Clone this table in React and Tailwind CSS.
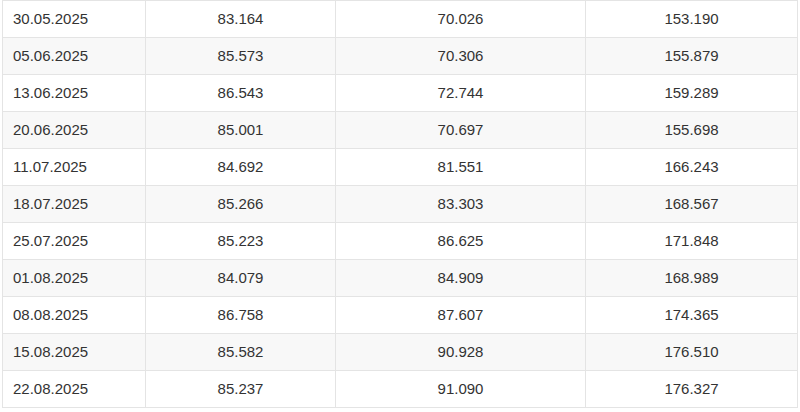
import React from "react";

const rows = [
  ["30.05.2025", "83.164", "70.026", "153.190"],
  ["05.06.2025", "85.573", "70.306", "155.879"],
  ["13.06.2025", "86.543", "72.744", "159.289"],
  ["20.06.2025", "85.001", "70.697", "155.698"],
  ["11.07.2025", "84.692", "81.551", "166.243"],
  ["18.07.2025", "85.266", "83.303", "168.567"],
  ["25.07.2025", "85.223", "86.625", "171.848"],
  ["01.08.2025", "84.079", "84.909", "168.989"],
  ["08.08.2025", "86.758", "87.607", "174.365"],
  ["15.08.2025", "85.582", "90.928", "176.510"],
  ["22.08.2025", "85.237", "91.090", "176.327"],
];

export default function App() {
  return (
    <div className="w-[800px] h-[412px] bg-white overflow-hidden pl-[2px]" style={{ fontFamily: '"Liberation Sans", Arial, sans-serif' }}>
      <table className="table-fixed border-collapse w-[795px] text-[15px] text-[#333333]">
        <colgroup>
          <col className="w-[143px]" />
          <col className="w-[190px]" />
          <col className="w-[250px]" />
          <col className="w-[212px]" />
        </colgroup>
        <tbody>
          {rows.map((r, i) => (
            <tr key={i} className={i % 2 === 1 ? "bg-[#f8f8f8]" : "bg-white"}>
              <td className="h-[37px] border border-[#e4e4e4] pl-[10px] p-0 align-middle">{r[0]}</td>
              <td className="h-[37px] border border-[#e4e4e4] p-0 text-center align-middle">{r[1]}</td>
              <td className="h-[37px] border border-[#e4e4e4] p-0 text-center align-middle">{r[2]}</td>
              <td className="h-[37px] border border-[#e4e4e4] p-0 text-center align-middle">{r[3]}</td>
            </tr>
          ))}
        </tbody>
      </table>
    </div>
  );
}
